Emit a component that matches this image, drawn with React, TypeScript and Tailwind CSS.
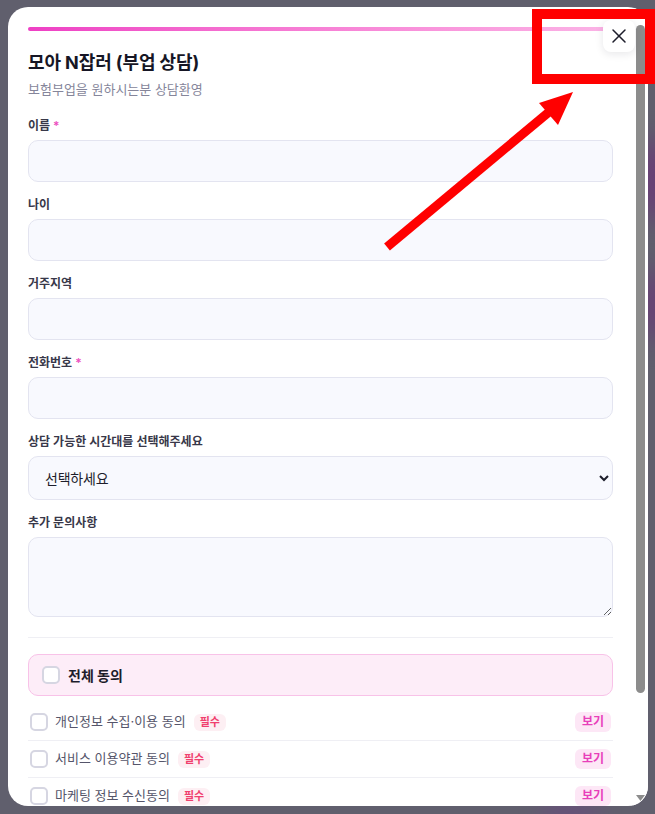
import React from 'react';
import { X } from 'lucide-react';

const fields = [
  { label: '이름', required: true },
  { label: '나이' },
  { label: '거주지역' },
  { label: '전화번호', required: true },
];

const agreements = ['개인정보 수집·이용 동의', '서비스 이용약관 동의', '마케팅 정보 수신동의'];

const font = "font-['Inter','Noto_Sans_CJK_KR',sans-serif]";

const Label = ({ text, required }: { text: string; required?: boolean }) => (
  <label className="block text-[12px] leading-[18px] font-semibold text-[#383849] mb-[5px]">
    {text}
    {required && <span className="ml-[3px] text-[#ec4fc0]">*</span>}
  </label>
);

const Box = ({ className = '' }: { className?: string }) => (
  <span className={`block w-[18px] h-[18px] shrink-0 rounded-[5px] border-2 border-[#d6d6e2] bg-white ${className}`} />
);

const Annotation = () => (
  <svg className="absolute inset-0 pointer-events-none" width="655" height="814" viewBox="0 0 655 814">
    <rect x="537" y="14" width="113" height="65" fill="none" stroke="#ff0000" strokeWidth="10" />
    <line x1="387" y1="247" x2="549" y2="112" stroke="#ff0000" strokeWidth="9" />
    <polygon points="573,92 539,103 558,125" fill="#ff0000" />
  </svg>
);

// the modal's scrollbar, drawn since the headless browser uses overlay bars
const Scrollbar = () => (
  <div className="w-[15px] shrink-0 bg-white flex flex-col items-center">
    <svg width="9" height="15" viewBox="0 0 9 15" className="shrink-0">
      <polygon points="4.5,4 9,10 0,10" fill="#8c8c8c" />
    </svg>
    <div className="mt-[3px] w-[9px] h-[668px] rounded-full bg-[#8c8c8c]" />
    <div className="flex-1" />
    <svg width="9" height="15" viewBox="0 0 9 15" className="shrink-0">
      <polygon points="0,4 9,4 4.5,10" fill="#8c8c8c" />
    </svg>
  </div>
);

export default function App() {
  return (
    <div className={`relative w-[655px] h-[814px] overflow-hidden bg-[#605f6d] pt-[7px] pl-[8px] ${font}`}>
      <div className="absolute right-[-30px] top-[140px] w-[60px] h-[80px] rounded-full bg-[#6a3a78] blur-[14px] opacity-80" />
      <div className="absolute right-[-30px] top-[270px] w-[60px] h-[70px] rounded-full bg-[#6a3a78] blur-[14px] opacity-70" />
      <div className="absolute left-[540px] bottom-[-20px] w-[60px] h-[40px] rounded-full bg-[#6a4a80] blur-[12px] opacity-60" />

      <div className="relative w-[640px] h-[799px] rounded-[20px] bg-white overflow-hidden flex">
        <div className="flex-1 h-full overflow-y-scroll [scrollbar-width:none] px-[20px] pt-[20px] pb-[24px]">
          <div className="h-[4px] rounded-full bg-gradient-to-r from-[#ee3fc4] to-[#fbb4e6]" />
          <h2 className="mt-[19px] text-[18px] leading-[26px] font-bold text-[#161625] tracking-[-0.1px]">모아 N잡러 (부업 상담)</h2>
          <p className="mt-[4px] text-[13px] leading-[18px] text-[#85859a]">보험부업을 원하시는분 상담환영</p>

          <div className="mt-[19px] flex flex-col gap-[14px]">
            {fields.map((f) => (
              <div key={f.label}>
                <Label text={f.label} required={f.required} />
                <input className="block w-full h-[42px] rounded-[10px] border border-[#e3e4f0] bg-[#f8f9fe] px-[16px] text-[14px] outline-none" />
              </div>
            ))}
            <div>
              <Label text="상담 가능한 시간대를 선택해주세요" />
              <select className="block w-full h-[44px] rounded-[10px] border border-[#e3e4f0] bg-[#f8f9fe] pl-[12px] pr-[4px] text-[14px] text-[#1d1d2b] tracking-[-0.2px] outline-none">
                <option>선택하세요</option>
              </select>
            </div>
            <div>
              <Label text="추가 문의사항" />
              <textarea className="block w-full h-[80px] rounded-[10px] border border-[#e3e4f0] bg-[#f8f9fe] px-[16px] py-[10px] text-[14px] outline-none resize-y" />
            </div>
          </div>

          <div className="mt-[20px] h-px bg-[#efeff4]" />

          <div className="mt-[16px] h-[42px] flex items-center gap-[8px] rounded-[10px] border border-[#f8c2e8] bg-[#fdedf8] pl-[13px]">
            <Box />
            <span className="text-[14px] font-bold text-[#1d1d2b]">전체 동의</span>
          </div>

          <div className="mt-[8px]">
            {agreements.map((a) => (
              <div key={a} className="h-[37px] flex items-center justify-between border-b border-[#efeff4]">
                <div className="flex items-center">
                  <Box className="ml-[2px]" />
                  <span className="ml-[7px] text-[13px] text-[#55556a]">{a}</span>
                  <span className="ml-[8px] rounded-[6px] bg-[#fdeff3] px-[6px] h-[17px] flex items-center text-[11px] font-bold text-[#f03f6e]">필수</span>
                </div>
                <button className="h-[20px] px-[7px] rounded-[6px] bg-[#fde7f6] text-[12px] font-bold text-[#e83fba] mr-[2px]">보기</button>
              </div>
            ))}
          </div>

          <button className="mt-[28px] w-full h-[56px] rounded-[12px] bg-gradient-to-r from-[#ee3fc4] to-[#f472b6] text-white text-[16px] font-bold">상담 신청하기</button>
        </div>

        <Scrollbar />

        <button className="absolute top-[13px] left-[595px] w-[32px] h-[32px] rounded-[8px] bg-white shadow-[0_2px_8px_rgba(20,20,40,0.1)] flex items-center justify-center text-[#1d1d2b]">
          <X size={24} strokeWidth={1.5} />
        </button>
      </div>

      <Annotation />
    </div>
  );
}
